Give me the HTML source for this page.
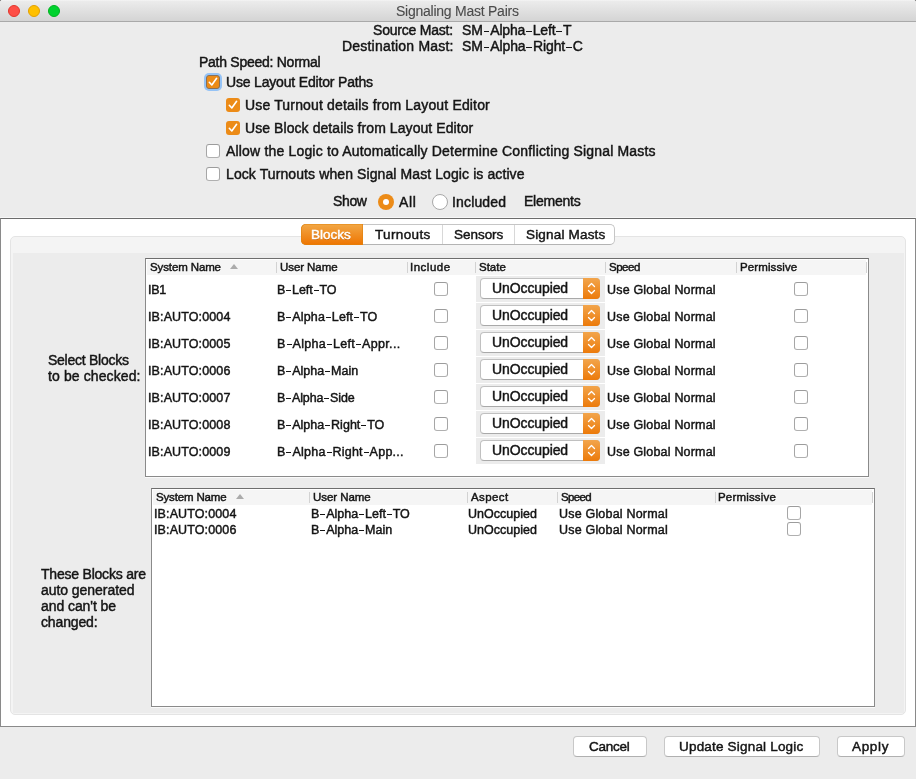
<!DOCTYPE html>
<html><head><meta charset="utf-8">
<style>
*{box-sizing:border-box;margin:0;padding:0}
html,body{width:916px;height:779px;overflow:hidden;background:#000}
body{font-family:"Liberation Sans",sans-serif;color:#141414;position:relative}
.win{position:absolute;left:0;top:0;width:916px;height:779px;background:#ececec;border-radius:2px 2px 0 0;overflow:hidden}
.a{position:absolute;white-space:nowrap;line-height:16px;will-change:transform;-webkit-text-stroke-width:0.45px}
.r{position:absolute}
.titlebar{position:absolute;left:0;top:0;width:916px;height:22px;background:linear-gradient(#f5f5f5 0,#ebebeb 1.5px,#d4d4d4 100%);border-bottom:1px solid #a9a9a9}
.light{position:absolute;top:5px;width:12px;height:12px;border-radius:50%}
.cb{position:absolute;width:14px;height:14px;border-radius:3px;background:#fff;border:1px solid #a6a6a6;border-top-color:#9c9c9c;border-bottom-color:#b0b0b0}
.cbon{position:absolute;width:14px;height:14px;border-radius:3px;background:#ec8b17}
.chk{position:absolute;left:0;top:0}
.tbl{position:absolute;background:#fff;border:1px solid #8a8a8a;border-top-color:#6e6e6e;box-shadow:0 1px 0 #fafafa}
.hdr{position:absolute;background:#f5f5f5}
.dv{position:absolute;width:1px;background:#d2d2d2}
.cell{position:absolute;width:129px;height:26px;background:#ececec}
.combo{position:absolute;width:120px;height:21px;border-radius:4px;background:#fff;border:1px solid #c0c0c0;border-bottom-color:#a9a9a9}
.arr{position:absolute;width:17px;height:21px;border-radius:0 4px 4px 0;background:linear-gradient(#f2a54c,#ec7a0a)}
.btn{position:absolute;height:21px;background:#fff;border:1px solid #c8c8c8;border-bottom-color:#b0b0b0;border-radius:4px}
.d{display:inline-block;width:5px;height:1.25px;background:currentColor;vertical-align:3px;margin:0 0.9px}.dm{display:inline-block;width:5.6px;height:1.4px;background:currentColor;vertical-align:2.9px;margin:0 1px}
.tri{position:absolute;width:0;height:0;border-left:4.5px solid transparent;border-right:4.5px solid transparent;border-bottom:5px solid #ababab}
</style></head><body>
<div class="win">
  <div class="titlebar"></div>
  <div class="light" style="left:8px;background:#fe4e46;border:1px solid #e2362c"></div>
  <div class="light" style="left:28px;background:#ffc000;border:1px solid #e3a000"></div>
  <div class="light" style="left:48px;background:#00d22e;border:1px solid #00b21f"></div>

  <!-- checkboxes top -->
  <div class="r" style="left:204px;top:73px;width:18px;height:18px;border-radius:5px;background:#95c3f6"></div>
  <div class="cbon" style="left:206px;top:75px;width:14px;height:14px;border:1px solid #8a7056"><svg class="chk" width="12" height="12" viewBox="0 0 12 12"><path d="M2.3 6.3 L4.8 9 L9.6 2.3" fill="none" stroke="#fff" stroke-width="1.6" stroke-linecap="round" stroke-linejoin="round"/></svg></div>
  <div class="cbon" style="left:226px;top:98px"><svg class="chk" width="14" height="14" viewBox="0 0 14 14"><path d="M3.3 7.3 L5.8 10 L10.6 3.3" fill="none" stroke="#fff" stroke-width="1.6" stroke-linecap="round" stroke-linejoin="round"/></svg></div>
  <div class="cbon" style="left:226px;top:121px"><svg class="chk" width="14" height="14" viewBox="0 0 14 14"><path d="M3.3 7.3 L5.8 10 L10.6 3.3" fill="none" stroke="#fff" stroke-width="1.6" stroke-linecap="round" stroke-linejoin="round"/></svg></div>
  <div class="cb" style="left:206px;top:144px"></div>
  <div class="cb" style="left:206px;top:167px"></div>

  <!-- radios -->
  <div class="r" style="left:378px;top:194px;width:16px;height:16px;border-radius:50%;background:#ec8b17"></div>
  <div class="r" style="left:383px;top:199px;width:6px;height:6px;border-radius:50%;background:#fff"></div>
  <div class="r" style="left:432px;top:194px;width:16px;height:16px;border-radius:50%;background:#fff;border:1px solid #a8a8a8"></div>

  <!-- outer panel -->
  <div class="r" style="left:0;top:217px;width:916px;height:1px;background:#f7f7f7"></div>
  <div class="r" style="left:0;top:218px;width:916px;height:509px;background:#fff;border:1px solid #8a8a8a;border-top-color:#6c6c6c"></div>
  <div class="r" style="left:10px;top:236px;width:896px;height:479px;background:#f4f4f4;border:1px solid #e4e4e4;border-radius:5px"></div>
  <div class="r" style="left:13px;top:253px;width:891px;height:460px;background:#ececec"></div>

  <!-- tabs -->
  <div class="r" style="left:301px;top:224px;width:314px;height:21px;background:#fff;border:1px solid #c6c6c6;border-bottom-color:#b4b4b4;border-radius:5px"></div>
  <div class="r" style="left:301px;top:224px;width:62px;height:21px;background:linear-gradient(#f2a846,#ee7400);border-radius:5px 0 0 5px;box-shadow:inset 0 0 0 0.6px #e0830f"></div>
  <div class="dv" style="left:442px;top:225px;height:19px;background:#d8d8d8"></div>
  <div class="dv" style="left:514px;top:225px;height:19px;background:#d8d8d8"></div>

  <!-- table 1 -->
  <div class="tbl" style="left:145px;top:258px;width:724px;height:219px"></div>
  <div class="hdr" style="left:147px;top:260px;width:719px;height:15px"></div>
  <div class="tri" style="left:230px;top:264px"></div>
  <div class="dv" style="left:276px;top:262px;height:11px"></div>
  <div class="dv" style="left:407px;top:262px;height:11px"></div>
  <div class="dv" style="left:475px;top:262px;height:11px"></div>
  <div class="dv" style="left:605px;top:262px;height:11px"></div>
  <div class="dv" style="left:736px;top:262px;height:11px"></div>
  <div class="dv" style="left:866px;top:262px;height:11px"></div>
  <div class="cell" style="left:476px;top:276px"></div>
  <div class="combo" style="left:480px;top:278px"></div>
  <div class="arr" style="left:583px;top:278px"><svg width="17" height="21" viewBox="0 0 17 21"><path d="M5.5 8.5 L8.5 5.5 L11.5 8.5 M5.5 12.5 L8.5 15.5 L11.5 12.5" fill="none" stroke="#fff" stroke-width="1.3" stroke-linecap="round" stroke-linejoin="round"/></svg></div>
  <div class="cb" style="left:434px;top:282px"></div>
  <div class="cb" style="left:794px;top:282px"></div>
  <div class="cell" style="left:476px;top:303px"></div>
  <div class="combo" style="left:480px;top:305px"></div>
  <div class="arr" style="left:583px;top:305px"><svg width="17" height="21" viewBox="0 0 17 21"><path d="M5.5 8.5 L8.5 5.5 L11.5 8.5 M5.5 12.5 L8.5 15.5 L11.5 12.5" fill="none" stroke="#fff" stroke-width="1.3" stroke-linecap="round" stroke-linejoin="round"/></svg></div>
  <div class="cb" style="left:434px;top:309px"></div>
  <div class="cb" style="left:794px;top:309px"></div>
  <div class="cell" style="left:476px;top:330px"></div>
  <div class="combo" style="left:480px;top:332px"></div>
  <div class="arr" style="left:583px;top:332px"><svg width="17" height="21" viewBox="0 0 17 21"><path d="M5.5 8.5 L8.5 5.5 L11.5 8.5 M5.5 12.5 L8.5 15.5 L11.5 12.5" fill="none" stroke="#fff" stroke-width="1.3" stroke-linecap="round" stroke-linejoin="round"/></svg></div>
  <div class="cb" style="left:434px;top:336px"></div>
  <div class="cb" style="left:794px;top:336px"></div>
  <div class="cell" style="left:476px;top:357px"></div>
  <div class="combo" style="left:480px;top:359px"></div>
  <div class="arr" style="left:583px;top:359px"><svg width="17" height="21" viewBox="0 0 17 21"><path d="M5.5 8.5 L8.5 5.5 L11.5 8.5 M5.5 12.5 L8.5 15.5 L11.5 12.5" fill="none" stroke="#fff" stroke-width="1.3" stroke-linecap="round" stroke-linejoin="round"/></svg></div>
  <div class="cb" style="left:434px;top:363px"></div>
  <div class="cb" style="left:794px;top:363px"></div>
  <div class="cell" style="left:476px;top:384px"></div>
  <div class="combo" style="left:480px;top:386px"></div>
  <div class="arr" style="left:583px;top:386px"><svg width="17" height="21" viewBox="0 0 17 21"><path d="M5.5 8.5 L8.5 5.5 L11.5 8.5 M5.5 12.5 L8.5 15.5 L11.5 12.5" fill="none" stroke="#fff" stroke-width="1.3" stroke-linecap="round" stroke-linejoin="round"/></svg></div>
  <div class="cb" style="left:434px;top:390px"></div>
  <div class="cb" style="left:794px;top:390px"></div>
  <div class="cell" style="left:476px;top:411px"></div>
  <div class="combo" style="left:480px;top:413px"></div>
  <div class="arr" style="left:583px;top:413px"><svg width="17" height="21" viewBox="0 0 17 21"><path d="M5.5 8.5 L8.5 5.5 L11.5 8.5 M5.5 12.5 L8.5 15.5 L11.5 12.5" fill="none" stroke="#fff" stroke-width="1.3" stroke-linecap="round" stroke-linejoin="round"/></svg></div>
  <div class="cb" style="left:434px;top:417px"></div>
  <div class="cb" style="left:794px;top:417px"></div>
  <div class="cell" style="left:476px;top:438px"></div>
  <div class="combo" style="left:480px;top:440px"></div>
  <div class="arr" style="left:583px;top:440px"><svg width="17" height="21" viewBox="0 0 17 21"><path d="M5.5 8.5 L8.5 5.5 L11.5 8.5 M5.5 12.5 L8.5 15.5 L11.5 12.5" fill="none" stroke="#fff" stroke-width="1.3" stroke-linecap="round" stroke-linejoin="round"/></svg></div>
  <div class="cb" style="left:434px;top:444px"></div>
  <div class="cb" style="left:794px;top:444px"></div>

  <!-- table 2 -->
  <div class="tbl" style="left:151px;top:488px;width:724px;height:219px"></div>
  <div class="hdr" style="left:153px;top:490px;width:719px;height:15px"></div>
  <div class="tri" style="left:236px;top:494px"></div>
  <div class="dv" style="left:309px;top:492px;height:11px"></div>
  <div class="dv" style="left:467px;top:492px;height:11px"></div>
  <div class="dv" style="left:557px;top:492px;height:11px"></div>
  <div class="dv" style="left:715px;top:492px;height:11px"></div>
  <div class="dv" style="left:872px;top:492px;height:11px"></div>
  <div class="cb" style="left:787px;top:506px"></div>
  <div class="cb" style="left:787px;top:522px"></div>

  <!-- buttons -->
  <div class="btn" style="left:573px;top:736px;width:74px"></div>
  <div class="btn" style="left:664px;top:736px;width:156px"></div>
  <div class="btn" style="left:837px;top:736px;width:68px"></div>

  <div class="a" style="left:396.3px;top:3px;font-size:14px;letter-spacing:-0.247px;color:#4b4b4b;-webkit-text-stroke-width:0.1px">Signaling Mast Pairs</div>
<div class="a" style="left:372.6px;top:22px;font-size:14px;letter-spacing:-0.209px">Source Mast:</div>
<div class="a" style="left:462.0px;top:22px;font-size:14px;letter-spacing:-0.182px">SM<i class="dm"></i>Alpha<i class="dm"></i>Left<i class="dm"></i>T</div>
<div class="a" style="left:342.0px;top:38px;font-size:14px;letter-spacing:0.206px">Destination Mast:</div>
<div class="a" style="left:462.0px;top:38px;font-size:14px;letter-spacing:-0.133px">SM<i class="dm"></i>Alpha<i class="dm"></i>Right<i class="dm"></i>C</div>
<div class="a" style="left:198.6px;top:54px;font-size:14px;letter-spacing:-0.265px">Path Speed: Normal</div>
<div class="a" style="left:225.7px;top:74px;font-size:14px;letter-spacing:-0.177px">Use Layout Editor Paths</div>
<div class="a" style="left:245.0px;top:97px;font-size:14px;letter-spacing:0.159px">Use Turnout details from Layout Editor</div>
<div class="a" style="left:245.0px;top:120px;font-size:14px;letter-spacing:0.074px">Use Block details from Layout Editor</div>
<div class="a" style="left:226.2px;top:143px;font-size:14px;letter-spacing:0.177px">Allow the Logic to Automatically Determine Conflicting Signal Masts</div>
<div class="a" style="left:225.5px;top:166px;font-size:14px;letter-spacing:0.096px">Lock Turnouts when Signal Mast Logic is active</div>
<div class="a" style="left:333.1px;top:193px;font-size:14px;letter-spacing:-0.367px">Show</div>
<div class="a" style="left:399.0px;top:194px;font-size:14px;letter-spacing:0.600px">All</div>
<div class="a" style="left:452.2px;top:194px;font-size:14px;letter-spacing:0.157px">Included</div>
<div class="a" style="left:524.4px;top:193px;font-size:14px;letter-spacing:-0.229px">Elements</div>
<div class="a" style="left:311.2px;top:227px;font-size:13.5px;letter-spacing:0.000px;color:#ffffff;text-shadow:0 0.6px 0.6px rgba(90,40,0,.35)">Blocks</div>
<div class="a" style="left:375.4px;top:227px;font-size:13.5px;letter-spacing:0.371px">Turnouts</div>
<div class="a" style="left:454.0px;top:227px;font-size:13.5px;letter-spacing:-0.033px">Sensors</div>
<div class="a" style="left:526.0px;top:227px;font-size:13.5px;letter-spacing:0.182px">Signal Masts</div>
<div class="a" style="left:48.0px;top:352px;font-size:14px;letter-spacing:-0.258px">Select Blocks</div>
<div class="a" style="left:48.0px;top:368px;font-size:14px;letter-spacing:0.108px">to be checked:</div>
<div class="a" style="left:40.9px;top:566px;font-size:14px;letter-spacing:-0.213px">These Blocks are</div>
<div class="a" style="left:41.4px;top:582px;font-size:14px;letter-spacing:-0.054px">auto generated</div>
<div class="a" style="left:41.4px;top:598px;font-size:14px;letter-spacing:-0.073px">and can't be</div>
<div class="a" style="left:41.4px;top:614px;font-size:14px;letter-spacing:-0.143px">changed:</div>
<div class="a" style="left:589.3px;top:739px;font-size:13.5px;letter-spacing:-0.240px">Cancel</div>
<div class="a" style="left:679.4px;top:739px;font-size:13.5px;letter-spacing:0.189px">Update Signal Logic</div>
<div class="a" style="left:852.3px;top:739px;font-size:13.5px;letter-spacing:0.675px">Apply</div>
<div class="a" style="left:149.8px;top:259px;font-size:11.5px;letter-spacing:-0.120px">System Name</div>
<div class="a" style="left:280.2px;top:259px;font-size:11.5px;letter-spacing:-0.075px">User Name</div>
<div class="a" style="left:410.0px;top:259px;font-size:11.5px;letter-spacing:0.500px">Include</div>
<div class="a" style="left:479.0px;top:259px;font-size:11.5px;letter-spacing:0.000px">State</div>
<div class="a" style="left:608.9px;top:259px;font-size:11.5px;letter-spacing:-0.475px">Speed</div>
<div class="a" style="left:739.6px;top:259px;font-size:11.5px;letter-spacing:0.100px">Permissive</div>
<div class="a" style="left:156.1px;top:489px;font-size:11.5px;letter-spacing:-0.160px">System Name</div>
<div class="a" style="left:312.8px;top:489px;font-size:11.5px;letter-spacing:-0.050px">User Name</div>
<div class="a" style="left:471.0px;top:489px;font-size:11.5px;letter-spacing:0.400px">Aspect</div>
<div class="a" style="left:561.0px;top:489px;font-size:11.5px;letter-spacing:-0.625px">Speed</div>
<div class="a" style="left:718.2px;top:489px;font-size:11.5px;letter-spacing:0.178px">Permissive</div>
<div class="a" style="left:147.6px;top:282px;font-size:12.5px;letter-spacing:-0.300px">IB1</div>
<div class="a" style="left:277.4px;top:282px;font-size:12.5px;letter-spacing:-0.067px">B<i class="d"></i>Left<i class="d"></i>TO</div>
<div class="a" style="left:492.2px;top:280px;font-size:14px;letter-spacing:-0.100px">UnOccupied</div>
<div class="a" style="left:606.6px;top:282px;font-size:12.5px;letter-spacing:0.188px">Use Global Normal</div>
<div class="a" style="left:147.6px;top:309px;font-size:12.5px;letter-spacing:0.118px">IB:AUTO:0004</div>
<div class="a" style="left:277.4px;top:309px;font-size:12.5px;letter-spacing:0.150px">B<i class="d"></i>Alpha<i class="d"></i>Left<i class="d"></i>TO</div>
<div class="a" style="left:492.2px;top:307px;font-size:14px;letter-spacing:-0.100px">UnOccupied</div>
<div class="a" style="left:606.6px;top:309px;font-size:12.5px;letter-spacing:0.188px">Use Global Normal</div>
<div class="a" style="left:147.6px;top:336px;font-size:12.5px;letter-spacing:0.118px">IB:AUTO:0005</div>
<div class="a" style="left:277.4px;top:336px;font-size:12.5px;letter-spacing:0.344px">B<i class="d"></i>Alpha<i class="d"></i>Left<i class="d"></i>Appr...</div>
<div class="a" style="left:492.2px;top:334px;font-size:14px;letter-spacing:-0.100px">UnOccupied</div>
<div class="a" style="left:606.6px;top:336px;font-size:12.5px;letter-spacing:0.188px">Use Global Normal</div>
<div class="a" style="left:147.6px;top:363px;font-size:12.5px;letter-spacing:0.118px">IB:AUTO:0006</div>
<div class="a" style="left:277.4px;top:363px;font-size:12.5px;letter-spacing:0.033px">B<i class="d"></i>Alpha<i class="d"></i>Main</div>
<div class="a" style="left:492.2px;top:361px;font-size:14px;letter-spacing:-0.100px">UnOccupied</div>
<div class="a" style="left:606.6px;top:363px;font-size:12.5px;letter-spacing:0.188px">Use Global Normal</div>
<div class="a" style="left:147.6px;top:390px;font-size:12.5px;letter-spacing:0.118px">IB:AUTO:0007</div>
<div class="a" style="left:277.4px;top:390px;font-size:12.5px;letter-spacing:-0.133px">B<i class="d"></i>Alpha<i class="d"></i>Side</div>
<div class="a" style="left:492.2px;top:388px;font-size:14px;letter-spacing:-0.100px">UnOccupied</div>
<div class="a" style="left:606.6px;top:390px;font-size:12.5px;letter-spacing:0.188px">Use Global Normal</div>
<div class="a" style="left:147.6px;top:417px;font-size:12.5px;letter-spacing:0.118px">IB:AUTO:0008</div>
<div class="a" style="left:277.4px;top:417px;font-size:12.5px;letter-spacing:0.025px">B<i class="d"></i>Alpha<i class="d"></i>Right<i class="d"></i>TO</div>
<div class="a" style="left:492.2px;top:415px;font-size:14px;letter-spacing:-0.100px">UnOccupied</div>
<div class="a" style="left:606.6px;top:417px;font-size:12.5px;letter-spacing:0.188px">Use Global Normal</div>
<div class="a" style="left:147.6px;top:444px;font-size:12.5px;letter-spacing:0.118px">IB:AUTO:0009</div>
<div class="a" style="left:277.4px;top:444px;font-size:12.5px;letter-spacing:0.250px">B<i class="d"></i>Alpha<i class="d"></i>Right<i class="d"></i>App...</div>
<div class="a" style="left:492.2px;top:442px;font-size:14px;letter-spacing:-0.100px">UnOccupied</div>
<div class="a" style="left:606.6px;top:444px;font-size:12.5px;letter-spacing:0.188px">Use Global Normal</div>
<div class="a" style="left:154.0px;top:506px;font-size:12.5px;letter-spacing:0.118px">IB:AUTO:0004</div>
<div class="a" style="left:310.5px;top:506px;font-size:12.5px;letter-spacing:0.018px">B<i class="d"></i>Alpha<i class="d"></i>Left<i class="d"></i>TO</div>
<div class="a" style="left:468.3px;top:506px;font-size:12.5px;letter-spacing:0.022px">UnOccupied</div>
<div class="a" style="left:558.5px;top:506px;font-size:12.5px;letter-spacing:0.194px">Use Global Normal</div>
<div class="a" style="left:154.0px;top:522px;font-size:12.5px;letter-spacing:0.118px">IB:AUTO:0006</div>
<div class="a" style="left:310.5px;top:522px;font-size:12.5px;letter-spacing:0.033px">B<i class="d"></i>Alpha<i class="d"></i>Main</div>
<div class="a" style="left:468.3px;top:522px;font-size:12.5px;letter-spacing:0.022px">UnOccupied</div>
<div class="a" style="left:558.5px;top:522px;font-size:12.5px;letter-spacing:0.194px">Use Global Normal</div>
</div>
</body></html>
